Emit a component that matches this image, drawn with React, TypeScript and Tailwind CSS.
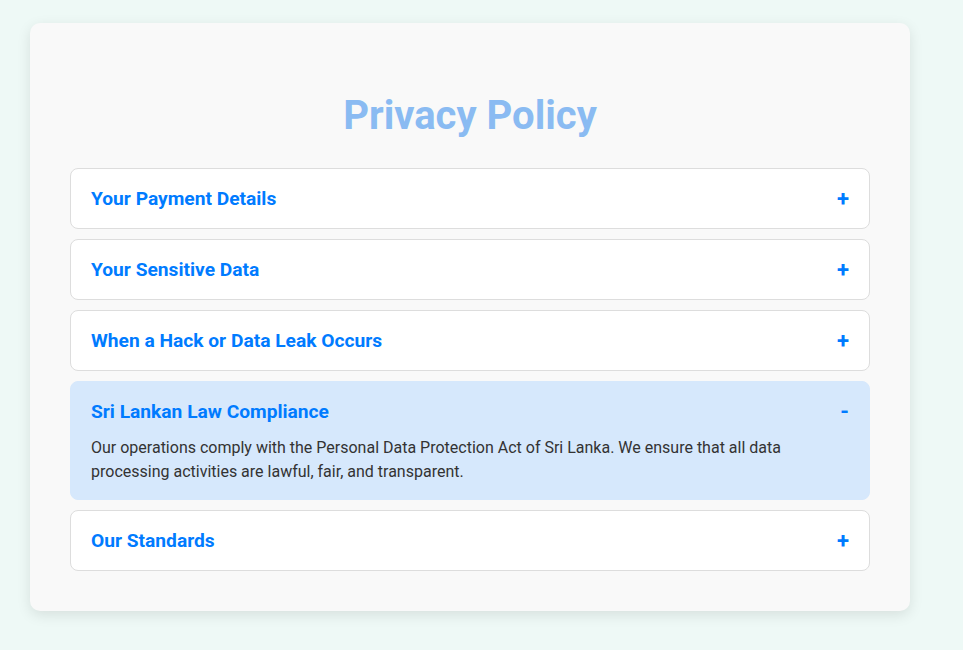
import { useState } from 'react';

type Section = {
  title: string;
  body: string;
};

const sections: Section[] = [
  {
    title: 'Your Payment Details',
    body: 'We never store your full card details. All payments are handled by trusted, PCI-compliant payment processors.',
  },
  {
    title: 'Your Sensitive Data',
    body: 'Sensitive information is encrypted at rest and in transit, and only authorised staff can access it.',
  },
  {
    title: 'When a Hack or Data Leak Occurs',
    body: 'If a breach happens, we will notify affected users and the relevant authorities as quickly as possible.',
  },
  {
    title: 'Sri Lankan Law Compliance',
    body: 'Our operations comply with the Personal Data Protection Act of Sri Lanka. We ensure that all data processing activities are lawful, fair, and transparent.',
  },
  {
    title: 'Our Standards',
    body: 'We follow industry best practices for security and review our policies regularly.',
  },
];

function AccordionItem({
  section,
  open,
  onToggle,
}: {
  section: Section;
  open: boolean;
  onToggle: () => void;
}) {
  return (
    <div
      className={
        open
          ? 'rounded-lg border border-[#d6e8fc] bg-[#d6e8fc] px-5 pt-5 pb-[15px]'
          : 'rounded-lg border border-[#dddddd] bg-white px-5 py-5'
      }
    >
      <button
        type="button"
        onClick={onToggle}
        className="flex h-[19px] w-full cursor-pointer items-center justify-between text-left"
      >
        <span className="text-[19.2px] leading-[19px] font-bold text-[#007bff]">{section.title}</span>
        <span className="text-[22px] leading-[19px] font-bold text-[#007bff]">{open ? '-' : '+'}</span>
      </button>
      {open && (
        <p className="mt-[15px] text-[16px] leading-6 text-[#333333]">{section.body}</p>
      )}
    </div>
  );
}

export default function App() {
  const [openIndex, setOpenIndex] = useState<number | null>(3);

  return (
    <div className="min-h-[650px] bg-[#eef9f6] pt-[23px] pl-[30px] font-['Roboto',sans-serif]">
      <div className="w-[880px] rounded-[10px] bg-[#f9f9f9] px-10 pt-10 pb-10 shadow-[0_4px_14px_rgba(0,0,0,0.1)]">
        <h1 className="mt-[29px] mb-[28px] text-center text-[40px] leading-[48px] font-bold text-[#8abbf2]">
          Privacy Policy
        </h1>
        <div className="flex flex-col gap-[10px]">
          {sections.map((s, i) => (
            <AccordionItem
              key={s.title}
              section={s}
              open={openIndex === i}
              onToggle={() => setOpenIndex(openIndex === i ? null : i)}
            />
          ))}
        </div>
      </div>
    </div>
  );
}
